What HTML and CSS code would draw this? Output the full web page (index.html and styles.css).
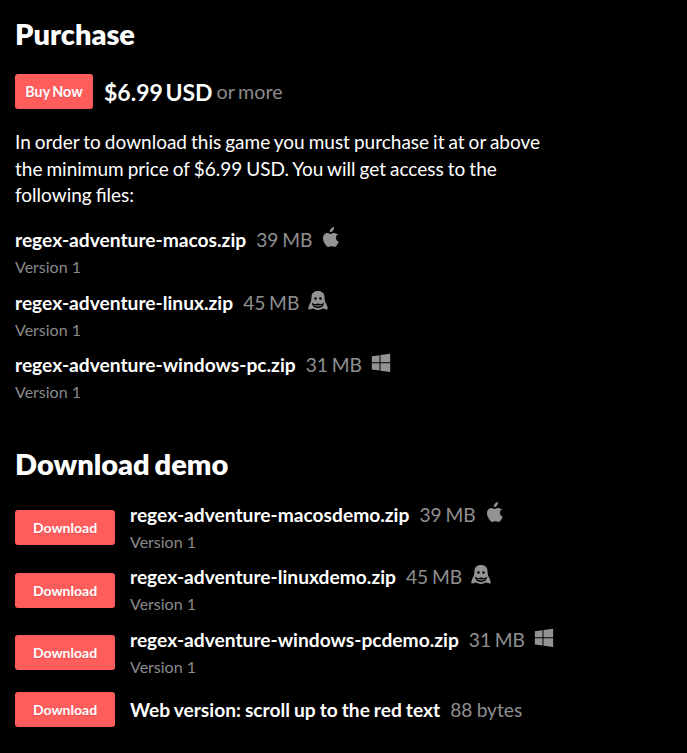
FILE: index.html
```html
<!DOCTYPE html>
<html lang="en">
<head>
  <meta charset="UTF-8" />
  <title>Purchase</title>
  <link rel="stylesheet" href="styles.css">
</head>
<body>
  <svg class="defs" width="0" height="0">
    <symbol id="apple" viewBox="0 0 20 20">
      <path d="M13.1 0c.1 1.300-.4 2.600-1.100 3.500-.8 1-2 1.700-3.200 1.600-.2-1.200.4-2.500 1.100-3.300.8-1 2.100-1.700 3.200-1.800zM17.100 6.900c-1.400.9-2.200 2.200-2.200 3.800 0 1.800 1.100 3.300 2.800 4-.4 1.200-1 2.300-1.700 3.300-.8 1.100-1.500 2-2.700 2-1.200 0-1.600-.7-3-.7s-1.900.7-3 .7c-1.200 0-2-1-2.800-2.200C3.200 15.800 2 13.700 2 11.300c0-3.400 2.300-5.200 4.600-5.200 1.200 0 2.100.8 2.900.8.7 0 1.800-.9 3.200-.9 1.300 0 3.200.6 4.400 1.900z"/>
    </symbol>
    <symbol id="tux" viewBox="0 -0.600 20 20">
      <path fill-rule="evenodd" d="M10 .3c-4.300 0-6.500 2.500-6.500 5.900 0 2-.3 3.500-.7 5.100C1.800 12.900.6 14.800.3 17.800c-.1.900.3 1.300 1 1.100l3.800-.9c1.400.9 3 1.400 4.900 1.400s3.500-.5 4.900-1.400l3.800.9c.7.2 1.100-.2 1-1.100-.3-3-1.500-4.900-2.500-6.500-.4-1.600-.7-3.100-.7-5.100C16.500 2.800 14.300.3 10 .3zM7.500 6.600a1.300 1.300 0 1 0 0 2.600 1.300 1.300 0 0 0 0-2.600zM12.500 6.600a1.300 1.300 0 1 0 0 2.600 1.300 1.300 0 0 0 0-2.600zM3.900 11.900c1.300 1.100 2.400 1.500 3.500 1.500.9 0 1.800-.6 2.600-.6s1.700.6 2.600.6c1.100 0 2.200-.4 3.500-1.500-.2 2.400-1.300 3.900-2.700 4.700-1 .5-2.200.8-3.400.8s-2.400-.3-3.400-.8c-1.400-.8-2.500-2.300-2.700-4.700zM6.100 14.200c.5 1 2 1.700 3.900 1.700s3.400-.7 3.900-1.700c-1.200.4-2.400.6-3.900.6s-2.700-.2-3.900-.6z"/>
    </symbol>
    <symbol id="win" viewBox="0 -1.200 20 20.700">
      <path d="M.5 3.200l8-1.100v7.300h-8zM9.500 1.900L19.500.5v8.900h-10zM.5 10.500h8v7.400l-8-1.100zM9.500 10.500h10v9l-10-1.400z"/>
    </symbol>
  </svg>

  <section class="purchase">
    <h2>Purchase</h2>
    <div class="buy-row">
      <a class="button buy-btn" href="#">Buy Now</a>
      <span class="price">$6.99 USD</span>
      <span class="or-more">or more</span>
    </div>
    <p class="notice">In order to download this game you must purchase it at or above the minimum price of $6.99 USD. You will get access to the following files:</p>
    <div class="uploads">
      <div class="upload">
        <div class="file-line"><strong class="name">regex-adventure-macos.zip</strong><span class="size">39 MB</span><svg class="os"><use href="#apple"/></svg></div>
        <div class="version">Version 1</div>
      </div>
      <div class="upload">
        <div class="file-line"><strong class="name">regex-adventure-linux.zip</strong><span class="size">45 MB</span><svg class="os"><use href="#tux"/></svg></div>
        <div class="version">Version 1</div>
      </div>
      <div class="upload">
        <div class="file-line"><strong class="name">regex-adventure-windows-pc.zip</strong><span class="size">31 MB</span><svg class="os"><use href="#win"/></svg></div>
        <div class="version">Version 1</div>
      </div>
    </div>
  </section>

  <section class="demo">
    <h2>Download demo</h2>
    <div class="demo-row">
      <a class="button dl-btn" href="#">Download</a>
      <div>
        <div class="file-line"><strong class="name">regex-adventure-macosdemo.zip</strong><span class="size">39 MB</span><svg class="os"><use href="#apple"/></svg></div>
        <div class="version">Version 1</div>
      </div>
    </div>
    <div class="demo-row">
      <a class="button dl-btn" href="#">Download</a>
      <div>
        <div class="file-line"><strong class="name">regex-adventure-linuxdemo.zip</strong><span class="size">45 MB</span><svg class="os"><use href="#tux"/></svg></div>
        <div class="version">Version 1</div>
      </div>
    </div>
    <div class="demo-row">
      <a class="button dl-btn" href="#">Download</a>
      <div>
        <div class="file-line"><strong class="name">regex-adventure-windows-pcdemo.zip</strong><span class="size">31 MB</span><svg class="os"><use href="#win"/></svg></div>
        <div class="version">Version 1</div>
      </div>
    </div>
    <div class="demo-row web-row">
      <a class="button dl-btn" href="#">Download</a>
      <div class="file-line"><strong class="name">Web version: scroll up to the red text</strong><span class="size">88 bytes</span></div>
    </div>
  </section>
</body>
</html>
```

FILE: styles.css
```css
html, body {
  margin: 0;
  padding: 0;
  background: #000;
  color: #fff;
  font-family: Lato, sans-serif;
}
body {
  padding: 14px 15px 0;
  overflow: hidden;
}
.defs {
  position: absolute;
}
h2 {
  margin: 0;
  font-size: 29px;
  line-height: 40px;
  font-weight: 800;
  word-spacing: -2px;
}
.buy-row {
  display: flex;
  align-items: center;
  margin-top: 20px;
}
.button {
  display: block;
  background: #ff5c5c;
  color: #fff;
  border-radius: 3px;
  font-size: 14px;
  font-weight: 700;
  text-align: center;
  text-decoration: none;
  line-height: 35px;
  height: 35px;
  text-shadow: 0 1px 0 rgba(0,0,0,0.15);
}
.buy-btn {
  width: 78px;
  font-size: 14.300px;
  word-spacing: -1px;
}
.price {
  margin-left: 11px;
  font-size: 23px;
  font-weight: 700;
  word-spacing: -3px;
}
.or-more {
  margin-left: 4px;
  font-size: 19.700px;
  color: #8a8a8a;
  word-spacing: -1.500px;
}
.notice {
  margin: 20px 0 0;
  width: 540px;
  font-size: 19px;
  line-height: 26.500px;
  word-spacing: -0.850px;
}
.uploads {
  margin-top: 17.500px;
}
.upload {
  margin-bottom: 8.500px;
}
.file-line {
  display: flex;
  align-items: center;
  font-size: 19.200px;
  line-height: 27px;
  word-spacing: -1.200px;
}
.name {
  font-weight: 700;
}
.size {
  margin-left: 10px;
  color: #8f8f8f;
}
.os {
  width: 20px;
  height: 20px;
  margin: -5px 0 0 9px;
  fill: #939393;
}
.version {
  font-size: 16px;
  line-height: 27px;
  color: #8a8a8a;
}
.demo {
  margin-top: 38.500px;
}
.demo h2 {
  margin-bottom: 17.300px;
}
.demo-row {
  display: flex;
  align-items: center;
  gap: 15px;
  margin-bottom: 8.500px;
}
.dl-btn {
  width: 100px;
}
.web-row {
  margin-top: 12px;
}
.web-row .file-line {
  word-spacing: -0.700px;
}
```
